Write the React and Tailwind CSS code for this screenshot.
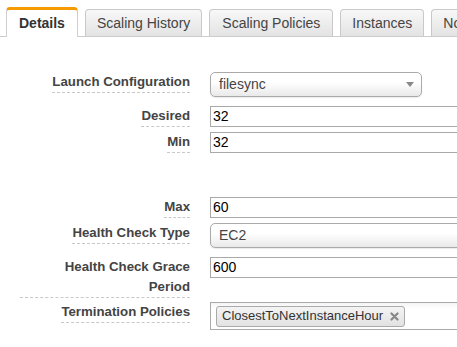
import React from "react";

const font = { fontFamily: '"Liberation Sans", Arial, sans-serif' };

function Tab({ children, active, pad = "px-[11px]" }) {
  if (active) {
    return (
      <div className="h-[30px] mb-[-1px] px-[12px] flex items-center bg-white border-t-[3px] border-t-[#f59a00] border-x border-x-[#cfcfcf] rounded-t-[4px] text-[14px] font-bold text-[#333] shrink-0">
        {children}
      </div>
    );
  }
  return (
    <div className={"h-[27px] flex items-center bg-linear-to-b from-[#f8f8f8] to-[#e3e3e3] border border-b-0 border-[#c9c9c9] rounded-t-[4px] text-[14px] text-[#444] shrink-0 whitespace-nowrap " + pad}>
      {children}
    </div>
  );
}

function Label({ children, wide }) {
  return (
    <div className="w-[190px] shrink-0 flex justify-end">
      <div
        className={
          "text-right text-[13.25px] font-bold leading-[20px] text-[#444] border-b border-dashed border-[#c8c8c8] " +
          (wide ? "w-[170px]" : "")
        }
      >
        {children}
      </div>
    </div>
  );
}

function TextInput({ value }) {
  return (
    <div className="w-[300px] h-[21px] border border-[#a9a9a9] bg-white flex items-center pl-[2px] text-[14px] text-black shrink-0">
      {value}
    </div>
  );
}

function Select({ value, width, arrow }) {
  return (
    <div
      className={
        "h-[25px] border border-[#aaa] rounded-[5px] bg-linear-to-b from-white from-40% to-[#e9e9e9] flex items-center pl-[8px] pr-[6px] text-[14px] text-[#444] shrink-0 shadow-[0_1px_1px_rgba(0,0,0,0.08)] " +
        width
      }
    >
      <span className="flex-1">{value}</span>
      {arrow && (
        <svg width="8" height="5" viewBox="0 0 8 5" className="mr-[1px]">
          <path d="M0 0 H8 L4 5 Z" fill="#888" />
        </svg>
      )}
    </div>
  );
}

export default function App() {
  return (
    <div className="w-[457px] h-[347px] overflow-hidden bg-white" style={font}>
      <div className="flex items-end gap-[7px] pl-[6px] h-[37px] border-b border-[#cccccc]">
        <Tab active>Details</Tab>
        <Tab>Scaling History</Tab>
        <Tab pad="px-[12px]">Scaling Policies</Tab>
        <Tab>Instances</Tab>
        <Tab>Notifications</Tab>
      </div>

      <div className="flex flex-col">
        <div className="flex gap-[20px] mt-[35px] items-start">
          <Label>Launch Configuration</Label>
          <Select value="filesync" width="w-[212px]" arrow />
        </div>
        <div className="flex gap-[20px] mt-[9px] items-start">
          <Label>Desired</Label>
          <TextInput value="32" />
        </div>
        <div className="flex gap-[20px] mt-[5px] items-start">
          <Label>Min</Label>
          <TextInput value="32" />
        </div>
        <div className="flex gap-[20px] mt-[44px] items-start">
          <Label>Max</Label>
          <TextInput value="60" />
        </div>
        <div className="flex gap-[20px] mt-[5px] items-start">
          <Label>Health Check Type</Label>
          <Select value="EC2" width="w-[300px]" />
        </div>
        <div className="flex gap-[20px] mt-[9px] items-start">
          <Label wide>
            Health Check Grace
            <br />
            Period
          </Label>
          <TextInput value="600" />
        </div>
        <div className="flex gap-[20px] mt-[4px] items-start">
          <Label>Termination Policies</Label>
          <div className="w-[300px] h-[28px] border border-[#aaa] bg-linear-to-b from-[#f4f4f4] from-0% to-white to-20% flex items-center pl-[5px] shrink-0">
            <div className="h-[21px] border border-[#aaa] rounded-[3px] bg-linear-to-b from-[#f4f4f4] to-[#e2e2e2] flex items-center pl-[5px] pr-[5px] text-[13px] text-[#333] whitespace-nowrap">
              ClosestToNextInstanceHour
              <svg width="9" height="9" viewBox="0 0 9 9" className="ml-[7px]">
                <path d="M1.5 1.5 L7.5 7.5 M7.5 1.5 L1.5 7.5" stroke="#888" strokeWidth="2.2" strokeLinecap="round" />
              </svg>
            </div>
          </div>
        </div>
      </div>
    </div>
  );
}
